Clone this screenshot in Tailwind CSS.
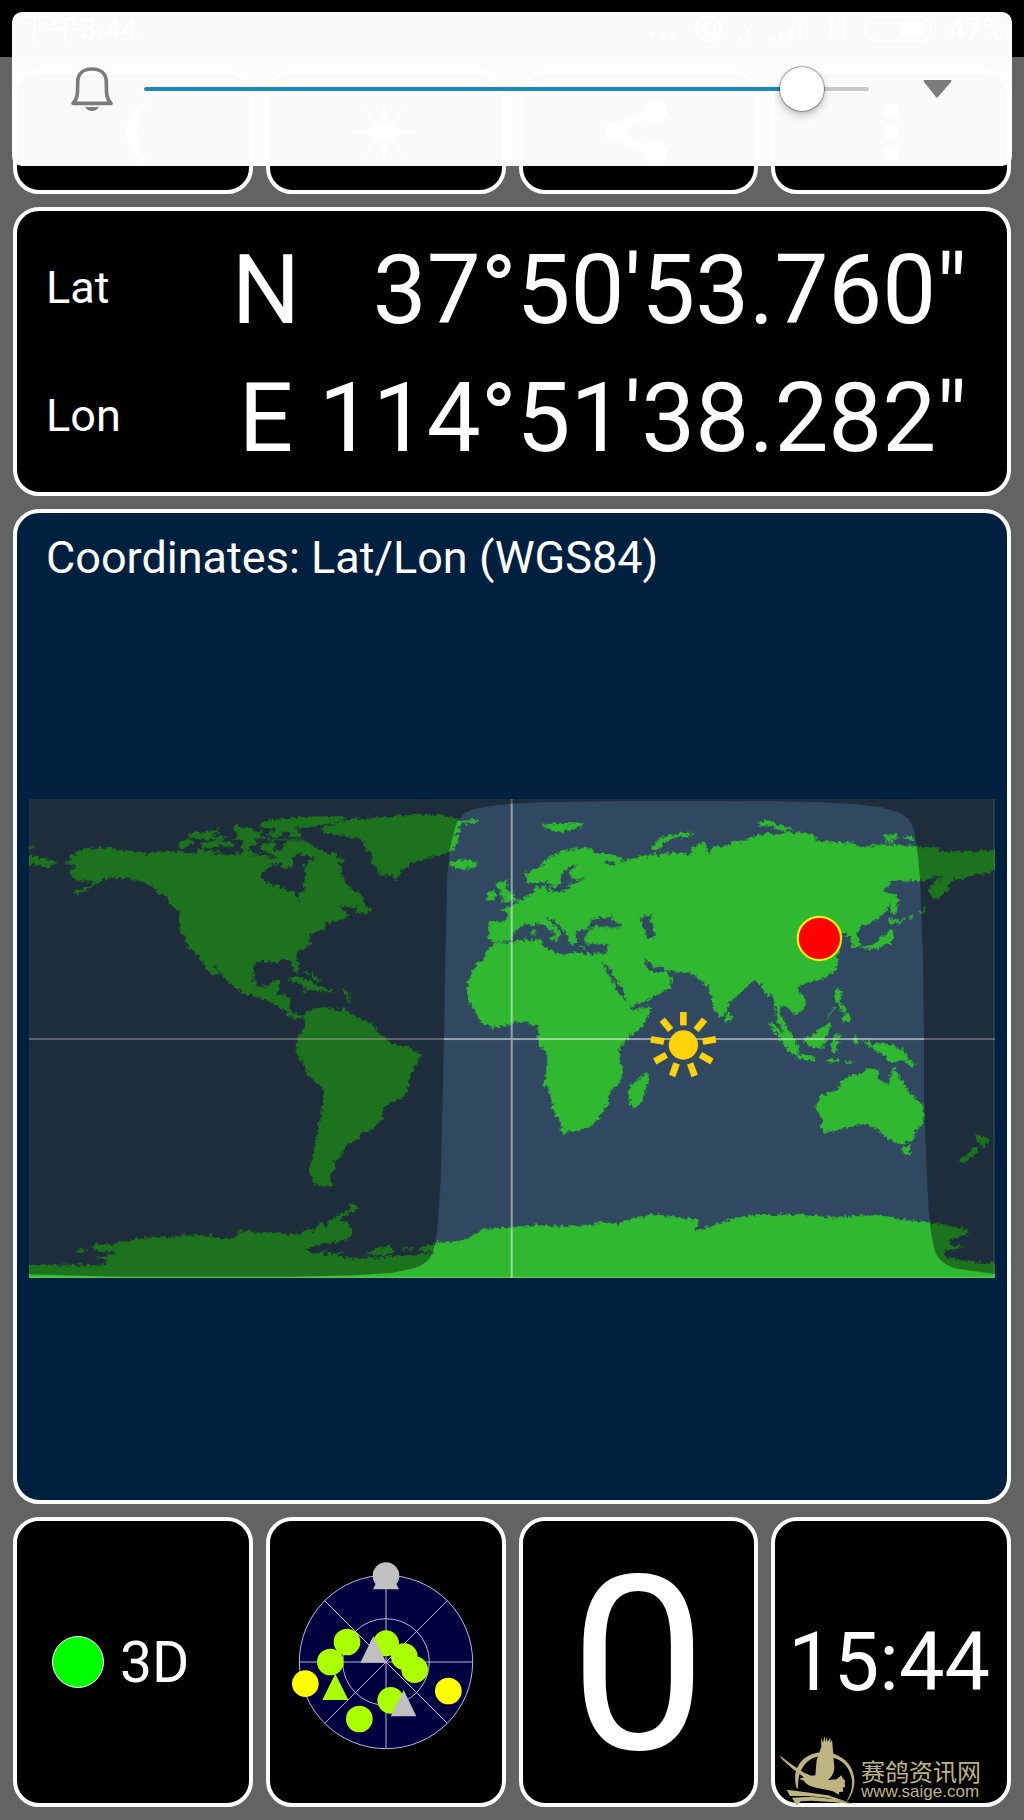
<!DOCTYPE html>
<html lang="en">
<head>
  <meta charset="UTF-8" />
  <title>GPS Test</title>
  <meta name="viewport" content="width=device-width, initial-scale=1" />
  <script src="https://cdn.jsdelivr.net/npm/@tailwindcss/browser@4"></script>
</head>
<body class="relative min-h-screen flex flex-col bg-[#636363] text-white font-['Roboto','Noto_Sans_CJK_SC',sans-serif] antialiased">

  <!-- System status bar -->
  <header class="h-[57px] bg-black flex items-center justify-between px-5 text-[30px]">
    <span>下午3:44</span>
    <div class="flex items-center gap-4">
      <svg class="w-8 h-8" viewBox="0 0 32 32" fill="currentColor"><circle cx="5" cy="22" r="3" /><circle cx="16" cy="22" r="3" /><circle cx="27" cy="22" r="3" /></svg>
      <svg class="w-7 h-7" viewBox="0 0 28 28" fill="none" stroke="currentColor" stroke-width="3"><circle cx="14" cy="14" r="12" /><circle cx="14" cy="13" r="6" /><path d="M10 18v7M18 18v7" /></svg>
      <svg class="w-18 h-7" viewBox="4 0 72 28" fill="currentColor"><path d="M4 20h3v6H4zM12 14h3v12h-3zM36 22h5v4h-5zM44 18h5v8h-5zM52 12h5v14h-5zM64 4h2v22h-2z" /></svg>
      <span>H</span>
      <svg class="w-[68px] h-[26px]" viewBox="0 0 68 26"><rect x="1" y="1" width="66" height="24" rx="12" fill="none" stroke="currentColor" stroke-width="2" /><path d="M36 5h18a8 8 0 0 1 0 16H36z" fill="currentColor" /></svg>
      <span>47%</span>
    </div>
  </header>

  <main class="flex-1 flex flex-col gap-[13px] p-[13px]">

    <!-- Toolbar -->
    <nav class="grid grid-cols-4 gap-[13px]">
      <button type="button" aria-label="Night mode" class="h-[124px] flex items-center justify-center rounded-[26px] border-4 border-white bg-black">
        <svg class="w-16 h-16" viewBox="0 0 64 64" fill="currentColor"><path d="M50 0A33 33 0 0 0 50 64A42 42 0 0 1 50 0Z" /></svg>
      </button>
      <button type="button" aria-label="Compass" class="h-[124px] flex items-center justify-center rounded-[26px] border-4 border-white bg-black">
        <svg class="w-16 h-16" viewBox="0 0 64 64" fill="currentColor"><path d="M30 0L35 25L49 8L39 28L61 32L39 36L49 56L35 39L30 64L25 39L11 56L21 36L-1 32L21 28L11 8L25 25Z" /></svg>
      </button>
      <button type="button" aria-label="Share" class="h-[124px] flex items-center justify-center rounded-[26px] border-4 border-white bg-black">
        <svg class="w-16 h-16" viewBox="3 0 64 64"><path d="M54 10L7 32L54 54" fill="none" stroke="currentColor" stroke-width="8" /><circle cx="53" cy="11" r="11" fill="currentColor" /><circle cx="11" cy="32" r="10" fill="currentColor" /><circle cx="53" cy="53" r="11" fill="currentColor" /></svg>
      </button>
      <button type="button" aria-label="More" class="h-[124px] flex items-center justify-center rounded-[26px] border-4 border-white bg-black">
        <svg class="w-16 h-16" viewBox="0 0 64 64" fill="currentColor"><rect x="25" y="4" width="14" height="14" rx="3" /><rect x="25" y="25" width="14" height="14" rx="3" /><rect x="25" y="46" width="14" height="14" rx="3" /></svg>
      </button>
    </nav>

    <!-- Position -->
    <section class="h-[289px] flex flex-col justify-center rounded-[26px] border-4 border-white bg-black pl-[29px] pr-10">
      <div class="h-32 flex items-center">
        <span class="w-[170px] text-[45px]">Lat</span>
        <span class="w-[100px] pt-1 text-center text-[96px] leading-none">N</span>
        <span class="flex-1 pt-1 text-right text-[96px] leading-none whitespace-nowrap">37°50'53.760"</span>
      </div>
      <div class="h-32 flex items-center">
        <span class="w-[170px] text-[45px]">Lon</span>
        <span class="w-[100px] pt-1 text-center text-[96px] leading-none">E</span>
        <span class="flex-1 pt-1 text-right text-[96px] leading-none whitespace-nowrap">114°51'38.282"</span>
      </div>
    </section>

    <!-- World map with day/night terminator -->
    <section class="flex-1 flex flex-col rounded-[26px] border-4 border-white bg-[#00203f]">
      <h1 class="pt-[26px] pl-[29px] text-[45px] leading-[38px]">Coordinates: Lat/Lon (WGS84)</h1>
      <div class="flex-1 flex items-center px-3">
        <svg class="w-full" viewBox="27 24 2898 1438">
          <defs>
            <filter id="coast" x="0" y="0" width="100%" height="100%" color-interpolation-filters="sRGB">
              <feTurbulence type="fractalNoise" baseFrequency="0.09" numOctaves="2" seed="4" />
              <feDisplacementMap in="SourceGraphic" scale="22" xChannelSelector="R" yChannelSelector="G" />
            </filter>
          </defs>
          <rect x="27" y="24" width="2898" height="1440" fill="#304961" />
          <g fill="#30b930" filter="url(#coast)">
            <!-- North America -->
            <path d="M130 217L150 210 150 195 180 180 210 170 235 172 270 170 300 178 335 180 380 186 410 182 470 180 530 187 535 170 560 180 575 192 640 190 700 195 720 190 745 200 785 202 790 215 750 225 735 240 722 258 740 275 775 285 800 297 820 300 835 327 840 310 857 295 850 270 857 250 850 225 870 205 885 208 880 195 860 195 840 185 820 195 815 225 800 235 785 225 782 205 765 195 735 180 715 165 745 155 765 150 765 180 785 182 792 160 805 150 860 150 870 162 900 175 930 190 945 182 948 195 975 208 970 218 952 215 965 230 962 245 970 265 985 285 1020 308 1032 322 1030 338 985 345 955 345 965 355 975 360 985 378 960 385 945 392 920 395 915 415 885 425 865 437 875 455 855 470 830 485 830 505 838 530 832 548 820 535 815 512 800 502 780 510 765 515 740 510 705 515 700 540 700 570 715 588 745 585 755 570 782 568 778 590 770 610 800 612 812 620 808 650 820 668 850 672 850 682 820 685 800 665 780 648 745 632 720 620 680 610 650 595 625 575 610 560 585 520 580 522 600 550 580 550 565 540 545 510 520 480 505 470 495 440 480 425 478 360 455 345 440 320 415 305 395 285 360 270 310 262 265 258 235 275 200 298 170 310 165 300 200 288 225 272 190 270 165 265 148 250 150 235 170 232 165 222Z" />
            <path d="M1008 362L1012 345 1030 330 1038 345 1055 350 1052 362 1035 370ZM970 335L1000 332 1010 345 985 352ZM17 190L60 200 95 205 112 212 95 225 80 230 45 220 17 230ZM17 165L48 170 17 178Z" />
            <!-- Arctic islands, Ellesmere, Greenland, Iceland -->
            <path d="M470 170L490 145 515 148 520 155 500 170ZM535 155L600 150 640 155 635 170 600 163 580 172 550 168ZM500 132L540 120 545 128 590 113 600 123 570 133 625 140 600 147 540 145 510 140ZM535 178L575 178 610 184 560 192ZM635 110L650 100 665 112 685 108 700 122 730 118 720 132 745 138 700 148 715 160 690 164 680 180 660 168 675 152 640 145 655 125ZM645 185L690 178 715 190 680 195ZM740 144H850V149H740ZM740 128L765 118 790 106 822 110 845 130 840 140 800 136 820 126 790 120 775 138 745 136Z" />
            <path d="M712 105L730 92 770 85 850 78 965 74 980 85 930 98 895 105 850 112 800 108 760 114 730 110ZM900 113L960 92 1010 82 1110 78 1170 70 1260 72 1315 85 1320 90 1372 86 1372 95 1330 98 1315 105 1325 125 1305 125 1315 140 1315 155 1300 170 1305 178 1288 185 1250 195 1210 205 1175 218 1145 240 1128 268 1110 252 1085 255 1068 230 1052 208 1060 190 1038 180 1030 150 1000 140 960 132 920 130ZM1288 215L1310 208 1350 205 1370 215 1365 230 1330 235 1300 230 1288 222Z" />
            <!-- Caribbean -->
            <path d="M805 565L830 558 870 570 890 582 915 590 940 598 900 600 860 594 845 578 815 572ZM850 545L865 538 860 552ZM875 542L903 570 892 572 868 552ZM968 592L985 603 992 640 983 625ZM925 595H939V603H925ZM845 597H860V602H845Z" />
            <!-- South America -->
            <path d="M850 672L865 660 885 652 910 645 940 655 975 655 1000 675 1040 692 1060 700 1070 725 1085 737 1120 760 1160 765 1200 790 1198 810 1170 850 1165 890 1150 920 1110 935 1090 955 1085 985 1050 1020 1020 1028 1020 1040 975 1065 965 1095 942 1110 948 1135 928 1155 930 1168 948 1185 895 1185 875 1165 868 1140 880 1090 885 1050 900 990 912 900 905 885 870 860 850 820 825 785 832 735 852 718 855 700Z" />
            <!-- Europe, Asia and Africa -->
            <g transform="translate(960 0)">
              <path d="M445 395L500 388 505 375 495 362 478 355 500 350 510 345 530 335 550 320 580 305 585 290 610 285 612 275 560 275 558 250 580 235 600 228 625 200 665 180 740 170 770 185 840 195 845 212 870 205 905 195 950 190 1020 183 1050 190 1055 172 1095 152 1103 180 1112 195 1114 168 1170 163 1175 150 1210 152 1235 135 1280 128 1320 130 1340 122 1420 128 1430 150 1540 155 1560 170 1630 160 1720 165 1795 172 1805 183 1890 182 1950 178 1980 170 1980 220 1955 245 1910 250 1870 262 1835 268 1820 300 1788 330 1768 310 1765 292 1795 265 1818 255 1780 255 1755 268 1660 270 1625 300 1655 308 1650 345 1620 380 1580 402 1558 410 1552 430 1562 470 1540 475 1530 440 1510 425 1500 440 1495 490 1488 535 1450 565 1400 575 1372 590 1398 630 1395 652 1368 674 1350 655 1325 645 1318 668 1332 690 1352 725 1350 738 1325 715 1310 685 1305 650 1298 610 1282 615 1272 600 1255 570 1235 574 1210 600 1170 632 1160 660 1142 682 1122 650 1108 600 1105 585 1085 575 1055 545 1020 545 975 537 985 550 998 562 990 590 950 612 905 635 875 645 868 655 890 655 925 645 932 660 905 710 870 735 840 770 838 800 848 840 845 870 810 900 805 935 775 985 740 1013 690 1020 665 1027 662 1000 640 955 628 900 610 875 622 830 620 790 595 755 595 712 585 705 555 692 520 697 455 712 420 690 400 650 380 625 382 575 410 515 430 510 440 480 465 452 443 440 445 420Z" />
              <g fill="#304961">
                <path d="M466 457L484 452 515 446 520 442 522 425 540 405 555 398 575 405 590 397 620 405 648 430 630 440 650 448 662 425 650 410 620 383 637 386 660 405 683 435 690 460 708 455 705 425 730 415 760 412 745 420 735 440 740 460 775 456 803 462 795 488 740 488 700 482 672 492 640 480 612 470 605 445 540 447 515 454Z" />
                <path d="M745 412L755 385 785 378 805 382 815 370 820 378 808 385 845 400 845 410 800 408 770 405ZM903 380L940 370 925 385 940 405 945 440 920 442 915 415 903 390ZM612 280L625 302 660 302 680 298 690 280 710 275 740 262 715 265 695 262 690 240 710 222 690 225 668 245 660 265 665 280 640 290 620 270ZM795 210L830 213 820 222 800 220ZM788 515L810 535 850 600 862 632 840 612 810 560ZM910 506L925 512 940 530 965 525 977 538 945 545 925 537ZM868 652L905 638 925 645 890 655Z" />
              </g>
              <path d="M470 275L500 268 500 285 505 300 530 320 525 332 480 338 495 322 480 315 485 300 470 290ZM435 325L445 305 465 298 470 315 460 328ZM602 103L640 97 735 97 715 110 700 115 655 125 625 115ZM932 170L950 155 960 140 990 132 1045 124 1068 130 1000 142 970 155 965 172 945 178ZM575 415H585V435H577ZM625 438L645 441 638 450ZM690 425L712 428 702 438 718 448 705 458ZM718 466H736V471H718ZM622 288H638V298H626Z" />
            </g>
            <!-- East Asian islands -->
            <g transform="translate(1980 0)">
              <path d="M232 100L250 88 280 92 290 102 340 110 310 122 290 115 265 105ZM608 130L650 132 655 140 630 145 645 155 610 155 622 145ZM670 138L695 137 705 145 680 146ZM632 310L645 308 655 330 648 365 635 372 632 345ZM626 378L650 388 672 386 665 398 645 395 630 403ZM628 413L640 420 635 455 615 465 600 465 590 475 550 472 545 468 590 455 605 435 622 430ZM678 380L700 374 697 382ZM718 370L738 345 742 350 725 372ZM465 593H485V615L480 635 502 655 495 668 480 650 466 628ZM480 685L500 668 513 678 515 692 500 697 490 688ZM438 684L462 646 466 652ZM140 660L158 680 150 692 137 690ZM262 692L285 700 320 735 355 765 350 780 330 778 300 745Z" />
            </g>
            <!-- Indonesia, Oceania, Madagascar -->
            <g transform="translate(1410 720)">
              <path d="M855 -5L905 10 925 45 922 78 895 60 875 30ZM922 70L980 80 978 90 925 82ZM940 25L970 10 1015 -25 1022 -15 1010 20 1000 50 960 48ZM1022 45L1030 12 1065 12 1038 22 1055 33 1036 42 1046 66 1036 58 1030 70ZM1008 85H1050V94H1008ZM1060 88L1088 92 1075 100ZM1088 20L1102 7 1098 20 1110 35 1095 45ZM1115 30L1135 30 1145 42 1175 35 1220 45 1245 65 1255 85 1282 100 1265 108 1235 85 1205 100 1185 75 1150 55Z" />
              <path d="M1210 105L1222 125 1235 150 1255 180 1300 225 1300 270 1275 305 1268 330 1225 340 1190 320 1160 295 1130 280 1095 282 1045 298 1000 305 990 290 997 270 978 230 990 195 1040 178 1050 155 1085 130 1105 135 1130 112 1165 115 1163 140 1195 160 1203 125ZM1232 352L1262 342 1260 370 1245 375ZM465 120L475 145 460 205 435 233 418 215 420 160 455 140ZM1452 303L1475 318 1500 320 1480 352 1468 340ZM1468 348L1455 370 1420 398 1405 390 1450 352Z" />
            </g>
            <!-- Antarctica -->
            <g transform="translate(0 720)">
              <path d="M0 700L260 703 255 685 225 678 290 668 285 664 240 660 210 650 230 640 280 642 300 630 370 622 440 618 480 614 560 612 600 622 650 620 655 600 670 602 690 597 700 605 760 605 800 610 850 608 862 590 880 603 890 585 905 575 920 590 925 570 960 548 990 535 985 525 1000 517 1012 530 1005 540 965 555 960 570 985 575 993 600 990 620 960 632 900 640 855 655 880 668 925 655 900 672 975 662 950 675 1020 683 1060 678 1150 675 1200 668 1242 666 1248 635 1320 628 1345 622 1370 605 1400 592 1470 590 1550 582 1620 587 1710 583 1750 573 1790 578 1840 560 1900 550 1950 555 2000 563 2038 565 2034 580 2025 597 2040 598 2060 588 2150 560 2230 550 2310 550 2370 552 2420 558 2510 555 2560 550 2600 555 2640 565 2690 572 2750 577 2810 588 2848 598 2840 612 2800 622 2788 632 2800 645 2835 648 2800 656 2772 660 2772 675 2810 685 2870 693 2950 695V770H0ZM1040 668L1075 650 1110 645 1125 660 1115 670 1060 672ZM1145 650H1175V656H1145ZM1195 655L1215 643 1252 637 1252 664 1210 662ZM168 658L185 653 205 660 190 664Z" />
            </g>
          </g>
          <path d="M27 744H2925M1475 24V1464" stroke="#fff" stroke-opacity=".5" stroke-width="6" />
          <path d="M27 1459H2922V24" fill="none" stroke="#fff" stroke-opacity=".15" stroke-width="5" />
          <!-- Night side -->
          <path d="M27 24H2925V1449L2810 1433Q2785 1427 2765 1410T2742 1370L2732 1320 2726 1260 2718 1100 2712 920V740L2708 480 2700 260 2692 180 2683 125Q2678 100 2665 85T2630 62L2580 48 2510 40 2410 34 2270 31 1980 30H1810L1560 34 1475 38 1410 45 1360 55Q1338 62 1325 75T1305 110L1290 170 1282 250 1276 500 1272 740 1268 920 1262 1170 1252 1320 1240 1380Q1232 1402 1215 1415T1180 1432L1120 1445 1000 1453 815 1457H290L27 1450Z" fill="#000" fill-opacity=".38" />
          <!-- Sun -->
          <g transform="translate(1990 762)" fill="#ffd20a">
            <circle r="44" />
            <path id="ray" d="M-10 -99H10V-59H-10Z" />
            <use href="#ray" transform="rotate(40)" />
            <use href="#ray" transform="rotate(80)" />
            <use href="#ray" transform="rotate(120)" />
            <use href="#ray" transform="rotate(160)" />
            <use href="#ray" transform="rotate(200)" />
            <use href="#ray" transform="rotate(240)" />
            <use href="#ray" transform="rotate(280)" />
            <use href="#ray" transform="rotate(320)" />
          </g>
          <!-- Current position -->
          <circle cx="2398" cy="442" r="65" fill="#f00" stroke="#ff0" stroke-width="6" />
        </svg>
      </div>
    </section>

    <!-- Status tiles -->
    <section class="grid grid-cols-4 gap-[13px] h-[290px]">
      <div class="flex items-center gap-4 rounded-[26px] border-4 border-white bg-black pl-[35px]">
        <span class="w-[52px] h-[52px] rounded-full border border-white bg-[#00ff00]"></span>
        <span class="text-[57px] leading-none">3D</span>
      </div>
      <div class="flex items-center justify-center rounded-[26px] border-4 border-white bg-black">
        <svg class="w-[194px]" viewBox="864 206 582 618">
          <g fill="none" stroke="#b8b4dc" stroke-width="3">
            <circle cx="1155" cy="515" r="260" fill="#000040" />
            <circle cx="1155" cy="515" r="130" />
            <path d="M895 515H1415M1155 255V775M971 331L1339 699M1339 331L971 699" />
          </g>
          <g fill="#aaff00">
            <circle cx="1155" cy="459" r="39" />
            <circle cx="1038" cy="455" r="40" />
            <circle cx="988" cy="515" r="40" />
            <circle cx="1210" cy="499" r="40" />
            <circle cx="1241" cy="538" r="40" />
            <circle cx="1169" cy="630" r="40" />
            <circle cx="1075" cy="686" r="40" />
            <path d="M1003 550L1042 629H964Z" />
          </g>
          <g fill="#c0c0c0">
            <circle cx="1155" cy="256" r="40" />
            <path d="M1155 218L1194 297H1116ZM1117 437L1156 517H1078ZM1208 599L1246 678H1169Z" />
          </g>
          <circle cx="913" cy="580" r="40" fill="#ff0" />
          <circle cx="1342" cy="602" r="40" fill="#ff0" />
        </svg>
      </div>
      <div class="flex items-center justify-center rounded-[26px] border-4 border-white bg-black">
        <span class="pt-2 text-[244px] leading-none">0</span>
      </div>
      <div class="relative flex items-center justify-center rounded-[26px] border-4 border-white bg-black">
        <time class="pr-1 text-[81px] leading-none">15:44</time>
        <!-- Watermark -->
        <a href="#" class="absolute right-[26px] -bottom-1 flex items-end gap-[3px] text-[#bdb482]">
          <svg class="w-20 h-[72px]" viewBox="20 45 240 216" fill="currentColor">
            <path fill-rule="evenodd" d="M76 205C58 145 95 98 155 97C215 98 252 140 249 190C246 218 236 235 224 247C240 222 246 196 240 170C230 130 200 112 160 108C110 106 78 145 80 205Z" />
            <path d="M24 105L38 116 60 133 98 158 120 167 132 166 136 120 150 80 149 53 155 68 159 48 163 66 166 50 169 66 176 53 178 68 182 58 184 80 188 130C192 150 185 168 170 180L196 178 210 166 214 175 222 182 220 190 222 200 214 203 216 215 204 216 202 224 185 214 150 206C125 202 105 196 98 182L84 177 98 172 62 145 32 118Z" />
            <path d="M46 209L100 216 170 226 230 246 170 234 110 228 56 228ZM62 233L120 230 190 238 257 254 190 247 120 242 88 244 76 258Z" />
          </svg>
          <span class="flex flex-col pb-[6px]">
            <span class="text-[24px] leading-[24px] font-['Noto_Sans_CJK_SC',sans-serif]">赛鸽资讯网</span>
            <span class="text-[17px] leading-[18px] font-['Liberation_Sans',sans-serif]">www.saige.com</span>
          </span>
        </a>
      </div>
    </section>
  </main>

  <!-- Volume panel -->
  <div class="absolute top-3 inset-x-3 h-[154px] flex items-center rounded-[10px] bg-white/98 pl-[59px] pr-[60px]">
    <svg class="w-[42px] h-11 text-[#7c7c7c]" viewBox="213 204 126 132">
      <path d="M219 313C232 300 233 290 233 250C233 222 252 210 276 210S319 222 319 250C319 290 320 300 333 313Z" fill="none" stroke="currentColor" stroke-width="11" stroke-linejoin="round" />
      <path d="M256 324H296Q290 336 276 336T256 324Z" fill="currentColor" />
    </svg>
    <input type="range" min="0" max="15" value="14" aria-label="Ringer volume"
      class="ml-[31px] mr-[54px] min-w-0 flex-1 h-11 appearance-none bg-transparent [&::-webkit-slider-runnable-track]:h-1 [&::-webkit-slider-runnable-track]:rounded-full [&::-webkit-slider-runnable-track]:bg-linear-[90deg,#1c87bf_91%,#cacaca_91%] [&::-webkit-slider-thumb]:appearance-none [&::-webkit-slider-thumb]:w-11 [&::-webkit-slider-thumb]:h-11 [&::-webkit-slider-thumb]:-mt-5 [&::-webkit-slider-thumb]:rounded-full [&::-webkit-slider-thumb]:bg-white [&::-webkit-slider-thumb]:shadow-[0_0_1px_1px_rgba(0,0,0,0.35),0_4px_8px_rgba(0,0,0,0.25)]" />
    <button type="button" aria-label="Expand" class="text-[#7c7c7c]">
      <svg class="w-[29px] h-[18px]" viewBox="0 0 29 18" fill="currentColor"><path d="M1 0H28Q29 1 28 2L15 17Q14 18 13 17L1 2Q0 1 1 0Z" /></svg>
    </button>
  </div>

</body>
</html>
